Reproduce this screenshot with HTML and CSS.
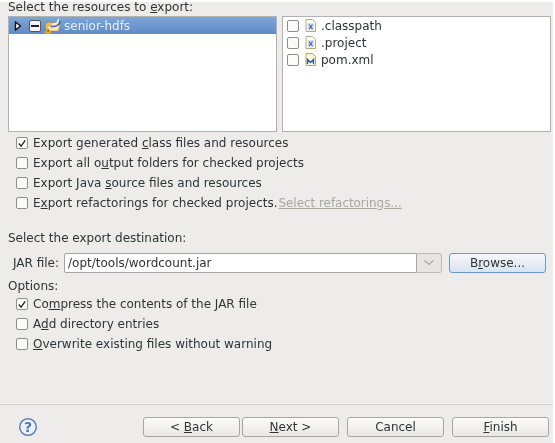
FILE: index.html
```html
<!DOCTYPE html>
<html lang="en">
<head>
<meta charset="utf-8">
<title>JAR Export</title>
<link rel="stylesheet" href="styles.css">
</head>
<body>
<div class="page">
  <div class="resources-label">Select the resources to <u>e</u>xport:</div>
  <div class="panes">
    <div class="pane tree">
      <div class="tree-row">
        <svg class="twisty" width="8" height="10" viewBox="0 0 8 10"><path d="M1.5 1 L6.5 5 L1.5 9 Z" fill="#fff" stroke="#111" stroke-width="1.4"/></svg>
        <span class="box box-mixed"><span class="dash"></span></span>
        <svg class="prj" width="17" height="16" viewBox="0 0 17 16">
          <path d="M1 7 L3 4 L8 4 L9 5.5 L14 5.5 L14 13 L2 13 Z" fill="#e5bd66" stroke="#9c7a3c" stroke-width=".7"/>
          <path d="M3.5 8 L16 7 L14 13 L2 13 Z" fill="#f8e7b0" stroke="#b8954c" stroke-width=".5"/>
          <path d="M8 6 Q14.5 7 14.5 1" fill="none" stroke="#f2f6fb" stroke-width="1.6"/>
          <path d="M6.5 8.5 Q13 9.5 16 5 L15.5 2.5" fill="none" stroke="#2c5c9c" stroke-width="1.1"/>
          <path d="M4 9.5 L7.8 15.5 L.2 15.5 Z" fill="#f4ae26"/>
          <rect x="3.6" y="11.6" width=".9" height="2.4" fill="#4a3410"/>
        </svg>
        <span class="tree-text">senior-hdfs</span>
      </div>
    </div>
    <div class="pane list">
      <div class="list-row">
        <span class="box"></span>
        <svg class="file" width="11" height="13" viewBox="0 0 11 13"><path d="M1 .5H7.5L10.5 3.5V12.5H1Z" fill="#fdfdf8" stroke="#b9a878"/><rect x="2.5" y="4" width="6.5" height="7.5" fill="#d3e1f2"/><path d="M4 5.5L7.5 10M7.5 5.5L4 10" stroke="#2f5f9e" stroke-width="1.1"/></svg>
        <span>.classpath</span>
      </div>
      <div class="list-row">
        <span class="box"></span>
        <svg class="file" width="11" height="13" viewBox="0 0 11 13"><path d="M1 .5H7.5L10.5 3.5V12.5H1Z" fill="#fdfdf8" stroke="#b9a878"/><rect x="2.5" y="4" width="6.5" height="7.5" fill="#d3e1f2"/><path d="M4 5.5L7.5 10M7.5 5.5L4 10" stroke="#2f5f9e" stroke-width="1.1"/></svg>
        <span>.project</span>
      </div>
      <div class="list-row">
        <span class="box"></span>
        <svg class="file" width="11" height="13" viewBox="0 0 11 13"><path d="M1 .5H7.5L10.5 3.5V12.5H1Z" fill="#fdf6e0" stroke="#c9a24e"/><path d="M2.5 11V6.5L5.5 9.5L8.5 6.5V11" fill="none" stroke="#2f5f9e" stroke-width="1.4"/></svg>
        <span>pom.xml</span>
      </div>
    </div>
  </div>

  <div class="checks">
    <div class="check"><span class="box box-on"><svg width="11" height="11" viewBox="0 0 11 11"><path d="M2 5.5L4.5 8.5L9 2" fill="none" stroke="#222" stroke-width="1.4"/></svg></span><span>Export generated <u>c</u>lass files and resources</span></div>
    <div class="check"><span class="box"></span><span>Export all o<u>u</u>tput folders for checked projects</span></div>
    <div class="check"><span class="box"></span><span>Export Java <u>s</u>ource files and resources</span></div>
    <div class="check"><span class="box"></span><span>E<u>x</u>port refactorings for checked projects.</span><span class="link">Select refactorings...</span></div>
  </div>

  <div class="dest-label">Select the export destination:</div>
  <div class="dest">
    <span class="jar-label">JAR file:</span>
    <div class="combo">
      <span class="combo-input">/opt/tools/wordcount.jar</span>
      <span class="combo-btn"><svg width="12" height="7" viewBox="0 0 12 7"><path d="M1.5 1.5L6 5.5L10.5 1.5" fill="none" stroke="#a9a8a4" stroke-width="1.2"/></svg></span>
    </div>
    <button class="btn btn-focus" type="button">B<u>r</u>owse...</button>
  </div>

  <div class="options-label">Options:</div>
  <div class="checks options">
    <div class="check"><span class="box box-on"><svg width="11" height="11" viewBox="0 0 11 11"><path d="M2 5.5L4.5 8.5L9 2" fill="none" stroke="#222" stroke-width="1.4"/></svg></span><span>Co<u>m</u>press the contents of the JAR file</span></div>
    <div class="check"><span class="box"></span><span>A<u>d</u>d directory entries</span></div>
    <div class="check"><span class="box"></span><span><u>O</u>verwrite existing files without warning</span></div>
  </div>

  <div class="spacer"></div>
  <div class="footer">
    <svg class="help" width="20" height="20" viewBox="0 0 20 20"><circle cx="10" cy="10" r="8.3" fill="#eef2f8" stroke="#5d83b5" stroke-width="1.5"/><text x="10" y="15" text-anchor="middle" class="help-mark">?</text></svg>
    <div class="footer-btns">
      <div class="nav-pair">
        <button class="btn" type="button">&lt; <u>B</u>ack</button>
        <button class="btn" type="button"><u>N</u>ext &gt;</button>
      </div>
      <button class="btn" type="button">Cancel</button>
      <button class="btn" type="button"><u>F</u>inish</button>
    </div>
  </div>
</div>
</body>
</html>
```
FILE: styles.css
```css
* { box-sizing: border-box; }
html, body { margin: 0; padding: 0; background: #fff; }
body { width: 555px; height: 443px; overflow: hidden; padding-top: 2px; }
.page {
  width: 553px;
  height: 441px;
  background: #edecea;
  display: flex;
  flex-direction: column;
  font-family: "DejaVu Sans", sans-serif;
  font-size: 12px;
  color: #2e3436;
  filter: blur(0.4px);
}
u { text-underline-offset: 1px; }
.resources-label { height: 14px; margin-left: 8px; line-height: 10px; flex: none; }
.panes { display: flex; gap: 5px; margin-left: 8px; width: 543px; height: 116px; flex: none; }
.pane { flex: 1; background: #fff; border: 1px solid #b3b2ae; }
.tree-row {
  height: 17px;
  display: flex;
  align-items: center;
  background: linear-gradient(#7ea5d6, #5f8cc5);
  color: #e6edf6;
  padding-left: 5px;
}
.twisty { margin-right: 7px; }
.prj { margin-left: 3px; margin-right: 3px; }
.box {
  width: 12px; height: 12px;
  flex: none;
  display: inline-flex;
  align-items: center;
  justify-content: center;
  background: #fbfbfa;
  border: 1px solid #8f8e8a;
  border-radius: 2px;
}
.box-mixed { background: #f5f5f3; border-color: #555; }
.dash { width: 8px; height: 2px; background: #222; }
.list-row { height: 17px; display: flex; align-items: center; padding-left: 4px; }
.file { margin-left: 6px; margin-right: 5px; }
.checks { margin-top: 1px; flex: none; }
.check { height: 20px; display: flex; align-items: center; padding-left: 16px; }
.check > .box { margin-right: 5px; }
.link { margin-left: 1px; font-size: 11.9px; color: #a9a89f; text-decoration: underline; }
.dest-label { margin: 17px 0 0 8px; height: 16px; line-height: 16px; flex: none; }
.dest { display: flex; align-items: center; margin: 6px 0 0 13px; height: 21px; flex: none; }
.jar-label { width: 51px; }
.combo { display: flex; width: 378px; height: 20px; margin-right: 7px; }
.combo-input {
  flex: 1;
  background: #fff;
  border: 1px solid #a5a4a0;
  border-radius: 2px 0 0 2px;
  padding-left: 3px;
  line-height: 18px;
}
.combo-btn {
  width: 25px;
  display: flex;
  align-items: center;
  justify-content: center;
  border: 1px solid #bdbcb8;
  border-left: 0;
  border-radius: 0 3px 3px 0;
  background: #e6e5e2;
}
.btn {
  width: 97px;
  height: 20px;
  padding: 0;
  font: inherit;
  color: inherit;
  border: 1px solid #a7a6a2;
  border-radius: 3px;
  background: linear-gradient(#fbfbfa, #e9e8e5);
}
.btn-focus {
  border-color: #6e95c8;
  background: linear-gradient(#f6f8fb, #dbe3ee);
}
.options-label { margin: 6px 0 0 8px; height: 14px; line-height: 14px; flex: none; }
.options { margin-top: 1px; }
.spacer { flex: 1; }
.footer {
  flex: none;
  height: 39px;
  border-top: 1px solid #d4d3cf;
  display: flex;
  align-items: flex-start;
  padding: 12px 0 0 18px;
}
.help-mark { font-family: "DejaVu Sans", sans-serif; font-size: 14px; font-weight: 700; fill: #4f78ad; }
.footer-btns { display: flex; gap: 8px; margin-left: 105px; }
.nav-pair { display: flex; gap: 2px; }
```
